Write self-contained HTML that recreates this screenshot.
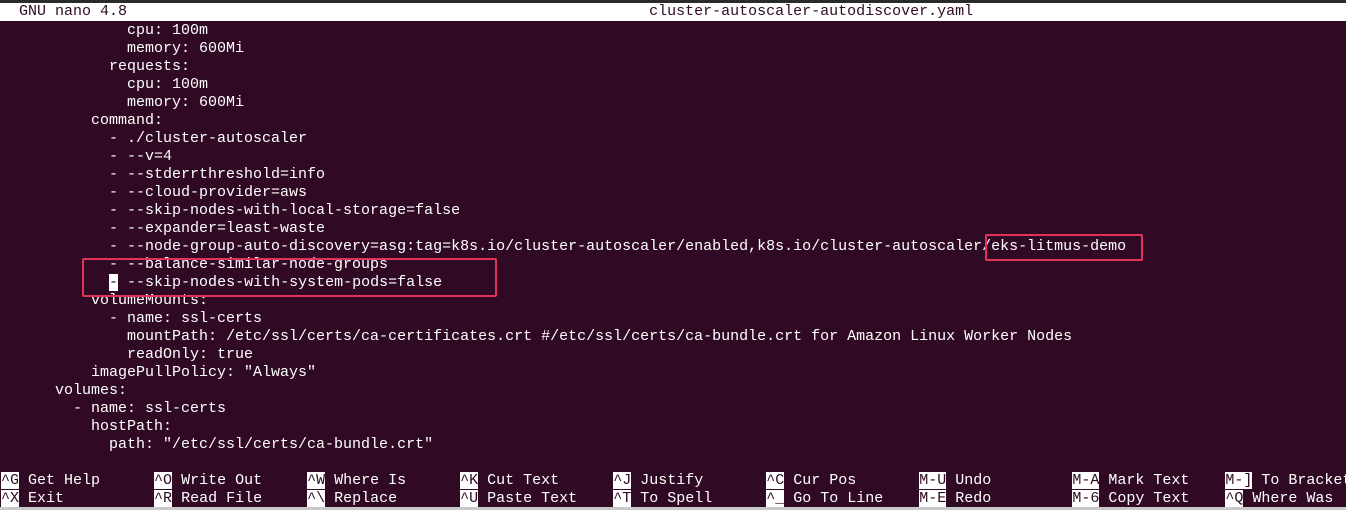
<!DOCTYPE html>
<html><head><meta charset="utf-8"><style>
html,body{margin:0;padding:0;}
body{width:1346px;height:510px;background:#300a24;position:relative;overflow:hidden;font-family:"Liberation Mono",monospace;font-size:15px;color:#ffffff;}
.r{position:absolute;left:1px;height:18px;line-height:18px;white-space:pre;margin-top:1px;}
.title{position:absolute;left:0;top:3px;width:1346px;height:18px;background:#ffffff;}
.title .r{color:#300a24;top:0;margin-top:0;}
.inv{background:#ffffff;color:#300a24;}
.box{position:absolute;border:2px solid #e0335a;border-radius:2px;}
.bot{position:absolute;left:0;top:507px;width:1346px;height:3px;background:#c8c8c8;}
</style></head><body>
<div style="position:absolute;left:0;top:0;width:1346px;height:3px;background:#2b2b2b"></div>
<div class="title"><div class="r">  GNU nano 4.8                                                          cluster-autoscaler-autodiscover.yaml</div></div>
<div class="r" style="top:21px">              cpu: 100m</div>
<div class="r" style="top:39px">              memory: 600Mi</div>
<div class="r" style="top:57px">            requests:</div>
<div class="r" style="top:75px">              cpu: 100m</div>
<div class="r" style="top:93px">              memory: 600Mi</div>
<div class="r" style="top:111px">          command:</div>
<div class="r" style="top:129px">            - ./cluster-autoscaler</div>
<div class="r" style="top:147px">            - --v=4</div>
<div class="r" style="top:165px">            - --stderrthreshold=info</div>
<div class="r" style="top:183px">            - --cloud-provider=aws</div>
<div class="r" style="top:201px">            - --skip-nodes-with-local-storage=false</div>
<div class="r" style="top:219px">            - --expander=least-waste</div>
<div class="r" style="top:237px">            - --node-group-auto-discovery=asg:tag=k8s.io/cluster-autoscaler/enabled,k8s.io/cluster-autoscaler/eks-litmus-demo</div>
<div class="r" style="top:255px">            - --balance-similar-node-groups</div>
<div class="r" style="top:273px">            <span class="inv">-</span> --skip-nodes-with-system-pods=false</div>
<div class="r" style="top:291px">          volumeMounts:</div>
<div class="r" style="top:309px">            - name: ssl-certs</div>
<div class="r" style="top:327px">              mountPath: /etc/ssl/certs/ca-certificates.crt #/etc/ssl/certs/ca-bundle.crt for Amazon Linux Worker Nodes</div>
<div class="r" style="top:345px">              readOnly: true</div>
<div class="r" style="top:363px">          imagePullPolicy: "Always"</div>
<div class="r" style="top:381px">      volumes:</div>
<div class="r" style="top:399px">        - name: ssl-certs</div>
<div class="r" style="top:417px">          hostPath:</div>
<div class="r" style="top:435px">            path: "/etc/ssl/certs/ca-bundle.crt"</div>
<div class="r" style="top:471px"><span class="inv">^G</span> Get Help      <span class="inv">^O</span> Write Out     <span class="inv">^W</span> Where Is      <span class="inv">^K</span> Cut Text      <span class="inv">^J</span> Justify       <span class="inv">^C</span> Cur Pos       <span class="inv">M-U</span> Undo         <span class="inv">M-A</span> Mark Text    <span class="inv">M-]</span> To Bracket</div>
<div class="r" style="top:489px"><span class="inv">^X</span> Exit          <span class="inv">^R</span> Read File     <span class="inv">^\</span> Replace       <span class="inv">^U</span> Paste Text    <span class="inv">^T</span> To Spell      <span class="inv">^_</span> Go To Line    <span class="inv">M-E</span> Redo         <span class="inv">M-6</span> Copy Text    <span class="inv">^Q</span> Where Was</div>
<div class="box" style="left:82px;top:258px;width:411px;height:35px"></div>
<div class="box" style="left:985px;top:234px;width:154px;height:23px"></div>
<div class="bot"></div>
</body></html>
